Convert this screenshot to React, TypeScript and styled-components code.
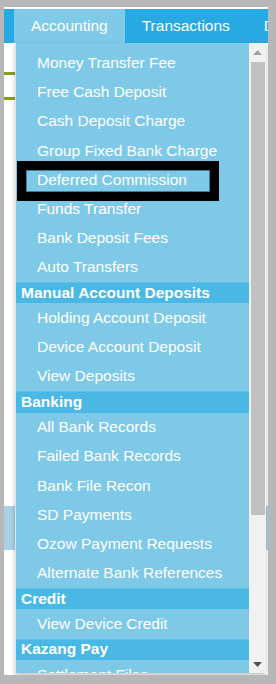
import React from "react";
import styled, { createGlobalStyle } from "styled-components";

const GlobalStyle = createGlobalStyle`
  html, body { margin: 0; padding: 0; }
  body {
    background: #b7b7b7;
    font-family: "Liberation Sans", Arial, sans-serif;
    width: 276px;
    height: 684px;
    overflow: hidden;
  }
`;

const Frame = styled.div`
  position: relative;
  margin: 7px 0 0 4px;
  width: 264px;
  height: 668px;
  background: #ffffff;
  padding-top: 2px;
  box-sizing: border-box;
  overflow: hidden;
`;

const NavBar = styled.nav`
  display: flex;
  height: 34px;
  padding-left: 10px;
  background: #27a9e1;
  overflow: hidden;
`;

const Tab = styled.div<{ $active?: boolean }>`
  flex-shrink: 0;
  padding: 0 17px;
  line-height: 34px;
  font-size: 15.5px;
  color: #ffffff;
  white-space: nowrap;
  background: ${(p) => (p.$active ? "#80c9e8" : "transparent")};
`;

const Content = styled.div`
  display: flex;
  flex-direction: column;
`;

const Rule = styled.div<{ $gap: number }>`
  margin-top: ${(p) => p.$gap}px;
  height: 2.5px;
  width: 240px;
  background: #8c9b1c;
`;

const Band = styled.div<{ $gap: number }>`
  margin-top: ${(p) => p.$gap}px;
  height: 44px;
  background: #a9d0e2;
`;

const Dropdown = styled.div`
  position: absolute;
  left: 11px;
  top: 36px;
  width: 251px;
  height: 630px;
  display: flex;
  border-left: 1px solid #d6e6ee;
  box-sizing: border-box;
  box-shadow: 0 2px 4px rgba(0, 0, 0, 0.25);
  z-index: 2;
`;

const List = styled.div`
  flex: 1;
  overflow: hidden;
  background: #7fc9e8;
  padding-top: 5.4px;
`;

const Item = styled.div`
  height: 29.2px;
  display: flex;
  align-items: center;
  padding-left: 21px;
  font-size: 15.5px;
  color: #ffffff;
  white-space: nowrap;
`;

const Header = styled.div`
  height: 21.6px;
  display: flex;
  align-items: center;
  padding-left: 5px;
  font-size: 15.5px;
  font-weight: bold;
  color: #ffffff;
  background: #4ab8e4;
  box-shadow: inset 0 1px 0 rgba(255, 255, 255, 0.12);
  white-space: nowrap;
`;

const ScrollTrack = styled.div`
  width: 17px;
  flex-shrink: 0;
  background: #f1f1f1;
  display: flex;
  flex-direction: column;
  align-items: center;
`;

const ArrowBtn = styled.div`
  height: 18px;
  width: 100%;
  display: flex;
  align-items: center;
  justify-content: center;
  flex-shrink: 0;
`;

const Thumb = styled.div`
  width: 14px;
  height: 453px;
  margin: 1px 0 0 1px;
  background: #c1c1c1;
`;

const Spacer = styled.div`
  flex: 1;
`;

const Mark = styled.div`
  position: absolute;
  left: 13px;
  top: 154px;
  width: 202px;
  height: 40px;
  box-sizing: border-box;
  border: 9px solid #000000;
  box-shadow: inset 0 0 0 1px #3d7d97;
  z-index: 3;
`;

const sections: { title?: string; items: string[] }[] = [
  {
    items: [
      "Money Transfer Fee",
      "Free Cash Deposit",
      "Cash Deposit Charge",
      "Group Fixed Bank Charge",
      "Deferred Commission",
      "Funds Transfer",
      "Bank Deposit Fees",
      "Auto Transfers",
    ],
  },
  {
    title: "Manual Account Deposits",
    items: ["Holding Account Deposit", "Device Account Deposit", "View Deposits"],
  },
  {
    title: "Banking",
    items: [
      "All Bank Records",
      "Failed Bank Records",
      "Bank File Recon",
      "SD Payments",
      "Ozow Payment Requests",
      "Alternate Bank References",
    ],
  },
  { title: "Credit", items: ["View Device Credit"] },
  { title: "Kazang Pay", items: ["Settlement Files"] },
];

export default function App() {
  return (
    <>
      <GlobalStyle />
      <Frame>
        <NavBar>
          <Tab $active>Accounting</Tab>
          <Tab>Transactions</Tab>
          <Tab>Devices</Tab>
        </NavBar>
        <Content>
          <Rule $gap={29} />
          <Rule $gap={22.5} />
          <Band $gap={406} />
        </Content>
        <Dropdown>
          <List>
            {sections.map((s, i) => (
              <React.Fragment key={i}>
                {s.title && <Header>{s.title}</Header>}
                {s.items.map((it) => (
                  <Item key={it}>{it}</Item>
                ))}
              </React.Fragment>
            ))}
          </List>
          <ScrollTrack>
            <ArrowBtn>
              <svg width="9" height="5" viewBox="0 0 9 5">
                <path d="M0 5 L4.5 0 L9 5 Z" fill="#a3a3a3" />
              </svg>
            </ArrowBtn>
            <Thumb />
            <Spacer />
            <ArrowBtn>
              <svg width="9" height="5" viewBox="0 0 9 5">
                <path d="M0 0 L9 0 L4.5 5 Z" fill="#505050" />
              </svg>
            </ArrowBtn>
          </ScrollTrack>
        </Dropdown>
        <Mark />
      </Frame>
    </>
  );
}
